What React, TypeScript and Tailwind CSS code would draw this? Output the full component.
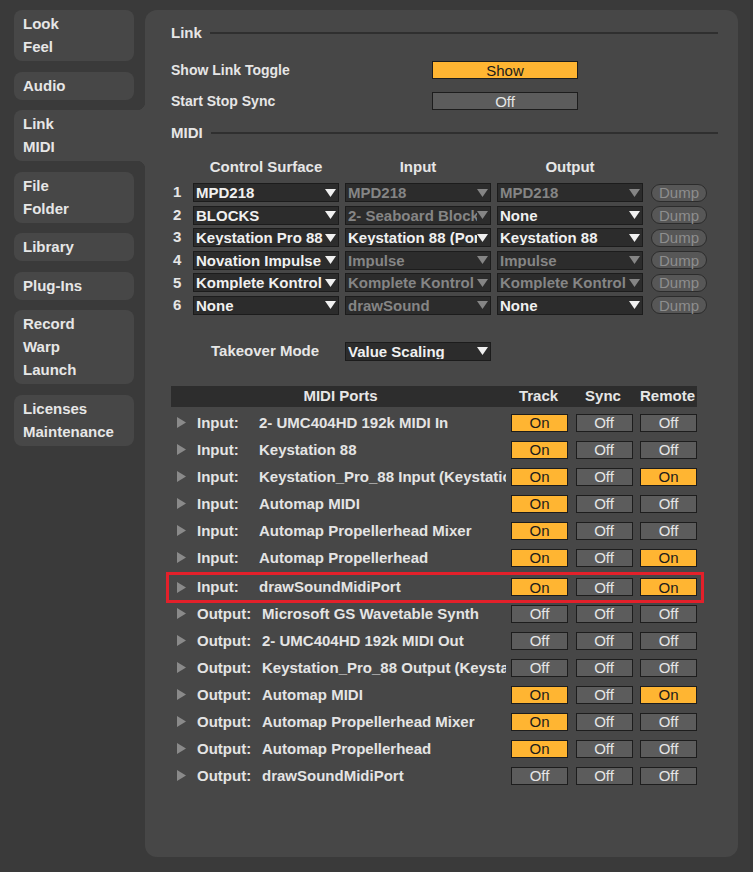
import React from "react"

const FONT = "font-['Liberation_Sans',Arial,sans-serif]"

interface ToggleProps {
  on: boolean
  label: string
  className?: string
}

function Toggle({ on, label, className = "" }: ToggleProps) {
  return (
    <div
      className={`h-[18px] flex items-center justify-center border border-[#1d1d1d] text-[15px] leading-none ${
        on ? "bg-[#ffb532] text-[#1b1b1b]" : "bg-[#5c5c5c] text-[#e6e6e6]"
      } ${className}`}
    >
      {label}
    </div>
  )
}

function Dropdown({ text, enabled }: { text: string; enabled: boolean }) {
  const color = enabled ? "#f0f0f0" : "#858585"
  return (
    <div className="w-[146px] h-[19px] shrink-0 flex items-center bg-[#2c2c2c] border border-[#1c1c1c] pl-[2px] pr-[2px]">
      <span
        className={`flex-1 min-w-0 overflow-hidden whitespace-nowrap font-bold text-[15px] leading-none ${
          enabled ? "text-[#f0f0f0]" : "text-[#858585]"
        }`}
      >
        {text}
      </span>
      <svg width="11" height="8" viewBox="0 0 11 8" className="shrink-0">
        <polygon points="0,0 11,0 5.5,8" fill={color} />
      </svg>
    </div>
  )
}

function SectionTitle({ title }: { title: string }) {
  return (
    <div className="h-[18px] flex items-center gap-[8px]">
      <span className="font-bold text-[15px] text-[#e6e6e6]">{title}</span>
      <div className="flex-1 h-[2px] bg-[#2f2f2f]" />
    </div>
  )
}

const tabs = [
  ["Look", "Feel"],
  ["Audio"],
  ["Link", "MIDI"],
  ["File", "Folder"],
  ["Library"],
  ["Plug-Ins"],
  ["Record", "Warp", "Launch"],
  ["Licenses", "Maintenance"],
]

// [control surface, input, input enabled, output, output enabled]
const surfaces: [string, string, boolean, string, boolean][] = [
  ["MPD218", "MPD218", false, "MPD218", false],
  ["BLOCKS", "2- Seaboard Block", false, "None", true],
  ["Keystation Pro 88", "Keystation 88 (Port 1)", true, "Keystation 88", true],
  ["Novation Impulse", "Impulse", false, "Impulse", false],
  ["Komplete Kontrol", "Komplete Kontrol", false, "Komplete Kontrol", false],
  ["None", "drawSound", false, "None", true],
]

// [kind, name, track, sync, remote]
const ports: [string, string, boolean, boolean, boolean][] = [
  ["Input", "2- UMC404HD 192k MIDI In", true, false, false],
  ["Input", "Keystation 88", true, false, false],
  ["Input", "Keystation_Pro_88 Input (Keystation Pro 88)", true, false, true],
  ["Input", "Automap MIDI", true, false, false],
  ["Input", "Automap Propellerhead Mixer", true, false, false],
  ["Input", "Automap Propellerhead", true, false, true],
  ["Input", "drawSoundMidiPort", true, false, true],
  ["Output", "Microsoft GS Wavetable Synth", false, false, false],
  ["Output", "2- UMC404HD 192k MIDI Out", false, false, false],
  ["Output", "Keystation_Pro_88 Output (Keystation Pro 88)", false, false, false],
  ["Output", "Automap MIDI", true, false, true],
  ["Output", "Automap Propellerhead Mixer", true, false, false],
  ["Output", "Automap Propellerhead", true, false, false],
  ["Output", "drawSoundMidiPort", false, false, false],
]

function PortRow({ port }: { port: [string, string, boolean, boolean, boolean] }) {
  const [kind, name, track, sync, remote] = port
  return (
    <div className="h-[27px] w-[526px] flex items-center">
      <svg width="9" height="11" viewBox="0 0 9 11" className="ml-[6px] mr-[11px] shrink-0">
        <polygon points="0,0 9,5.5 0,11" fill="#8a8a8a" />
      </svg>
      <span
        className={`shrink-0 font-bold text-[15px] text-[#e4e4e4] whitespace-nowrap ${
          kind === "Input" ? "w-[62px]" : "w-[65px]"
        }`}
      >
        {kind}:
      </span>
      <span className="flex-1 min-w-0 overflow-hidden whitespace-nowrap font-bold text-[15px] text-[#e4e4e4]">
        {name}
      </span>
      <div className="flex gap-[7.5px] ml-[5px] shrink-0">
        <Toggle on={track} label={track ? "On" : "Off"} className="w-[57px]" />
        <Toggle on={sync} label={sync ? "On" : "Off"} className="w-[57px]" />
        <Toggle on={remote} label={remote ? "On" : "Off"} className="w-[57px]" />
      </div>
    </div>
  )
}

export default function App() {
  return (
    <div className={`w-[753px] h-[872px] bg-[#3a3a3a] flex ${FONT}`}>
      {/* Sidebar tabs */}
      <div className="w-[145px] shrink-0 pt-[10px] pl-[14px] flex flex-col gap-[10.5px]">
        {tabs.map((lines) => {
          const active = lines[0] === "Link"
          return (
            <div
              key={lines[0]}
              className={`relative bg-[#474747] pl-[9px] pt-[2px] pb-[3px] ${
                active ? "w-[131px] rounded-l-[8px]" : "w-[120px] rounded-[8px]"
              }`}
            >
              {lines.map((l) => (
                <div key={l} className="font-bold text-[15px] leading-[23px] text-[#e6e6e6]">
                  {l}
                </div>
              ))}
              {active && (
                <>
                  <div className="absolute right-0 -top-[8px] w-[8px] h-[8px] bg-[radial-gradient(circle_at_0_0,#3a3a3a_8px,#474747_8.5px)]" />
                  <div className="absolute right-0 -bottom-[8px] w-[8px] h-[8px] bg-[radial-gradient(circle_at_0_100%,#3a3a3a_8px,#474747_8.5px)]" />
                </>
              )}
            </div>
          )
        })}
      </div>

      {/* Main panel */}
      <div className="mt-[10px] w-[593px] h-[847px] bg-[#474747] rounded-[12px] pl-[26px] pr-[20px] pt-[14px] flex flex-col text-[#e6e6e6]">
        <SectionTitle title="Link" />

        <div className="mt-[19px] h-[18px] flex items-center">
          <span className="w-[261px] font-bold text-[14px]">Show Link Toggle</span>
          <Toggle on label="Show" className="w-[146px]" />
        </div>
        <div className="mt-[13px] h-[18px] flex items-center">
          <span className="w-[261px] font-bold text-[14px]">Start Stop Sync</span>
          <Toggle on={false} label="Off" className="w-[146px]" />
        </div>

        <div className="mt-[14px]">
          <SectionTitle title="MIDI" />
        </div>

        {/* Control surface table */}
        <div className="mt-[16px] h-[18px] flex items-center font-bold text-[15px]">
          <span className="w-[22px]" />
          <span className="w-[146px] text-center">Control Surface</span>
          <span className="w-[146px] ml-[6px] text-center">Input</span>
          <span className="w-[146px] ml-[6px] text-center">Output</span>
        </div>
        <div className="mt-[7px] flex flex-col gap-[3.6px]">
          {surfaces.map(([cs, inp, inpOn, out, outOn], i) => (
            <div key={i} className="h-[19px] flex items-center">
              <span className="w-[22px] pl-[2px] font-bold text-[15px]">{i + 1}</span>
              <Dropdown text={cs} enabled />
              <div className="ml-[6px]">
                <Dropdown text={inp} enabled={inpOn} />
              </div>
              <div className="ml-[6px]">
                <Dropdown text={out} enabled={outOn} />
              </div>
              <div className="ml-[8px] w-[56px] h-[18px] rounded-full bg-[#575757] border border-[#2c2c2c] flex items-center justify-center text-[15px] leading-none text-[#8e8e8e]">
                Dump
              </div>
            </div>
          ))}
        </div>

        {/* Takeover mode */}
        <div className="mt-[27px] h-[19px] flex items-center">
          <span className="w-[174px] pl-[40px] font-bold text-[15px]">Takeover Mode</span>
          <Dropdown text="Value Scaling" enabled />
        </div>

        {/* MIDI Ports */}
        <div className="mt-[25px] w-[526px] h-[21px] bg-[#2d2d2d] flex items-center font-bold text-[15px]">
          <span className="w-[339px] text-center">MIDI Ports</span>
          <span className="w-[57px] text-center">Track</span>
          <span className="w-[57px] ml-[7.5px] text-center">Sync</span>
          <span className="w-[57px] ml-[7.5px] text-center">Remote</span>
        </div>
        <div className="mt-[2.5px] flex flex-col">
          {ports.map((p, i) =>
            i === 6 ? (
              <div
                key={i}
                className="-ml-[5px] w-[538px] h-[31px] mt-[0.5px] -mb-[2.5px] border-[3px] border-[#e3202a] pl-[2px] flex items-center"
              >
                <PortRow port={p} />
              </div>
            ) : (
              <PortRow key={i} port={p} />
            )
          )}
        </div>
      </div>
    </div>
  )
}
